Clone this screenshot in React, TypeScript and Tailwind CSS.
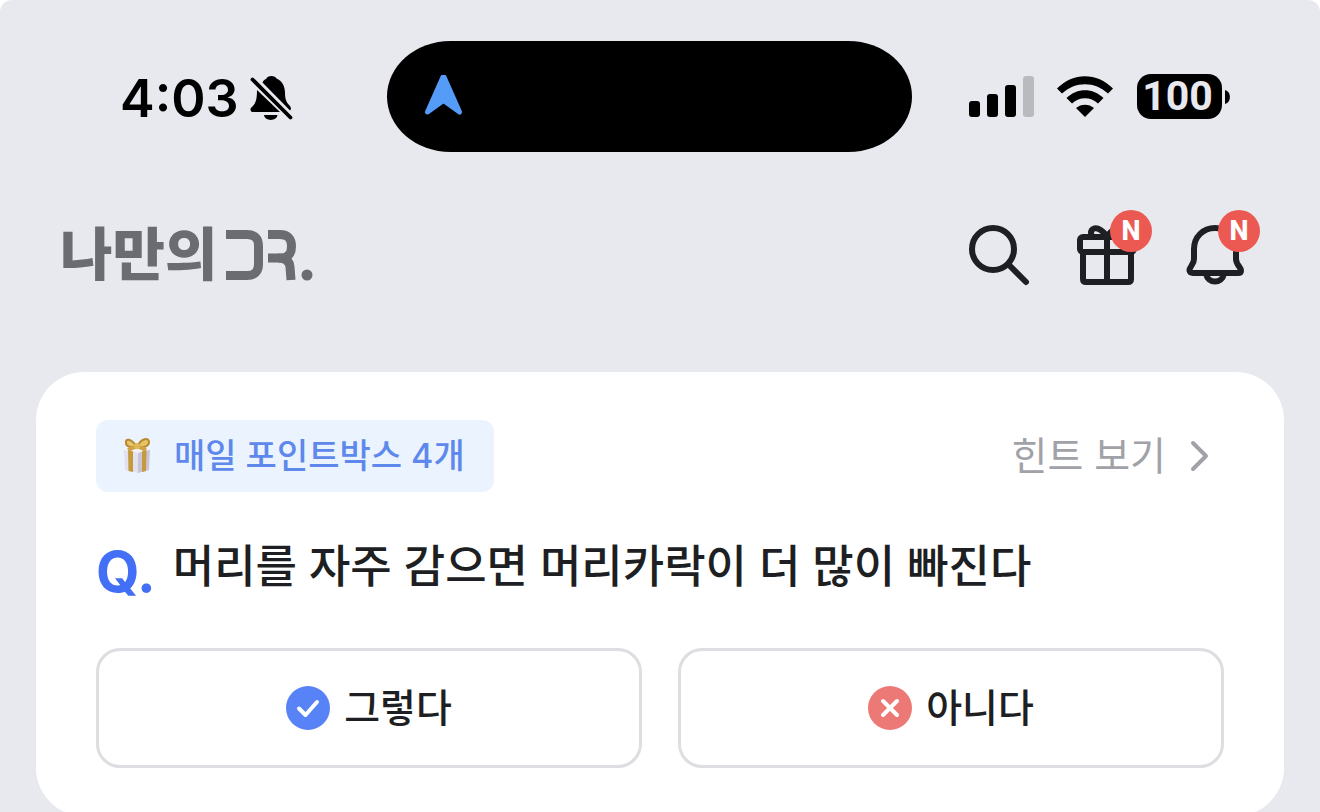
import type { ReactNode } from 'react';

function StatusBar() {
  return (
    <div className="flex items-center pl-[120px] pr-[90px] pt-[41px] text-black">
      <div className="flex shrink-0 items-center gap-[10px]">
        <span className="pt-1 text-[52px] font-semibold leading-[60px]">4:03</span>
        <svg viewBox="0 0 46 50" className="h-[50px] w-[46px]" aria-label="무음 모드">
          <path d="M8 18 L31 40 H3 C1 39 1 36 3 35 C7 31 8 27 8 18Z" />
          <path d="M13.500 10.500 C14.500 8 16 7.500 17.500 6.500 C18 3 26.500 3 27.500 6.500 C33 9 36 14 36 21 C36 28 38 31 41 34 C42.500 36 42 37.500 41 38.500 Z" />
          <path d="M15 43 H28.500 C27.500 49.500 16 49.500 15 43Z" />
          <path d="M3.500 7.500 L41.500 45.500" stroke="#000" strokeWidth="3.800" strokeLinecap="round" />
        </svg>
      </div>

      <div className="ml-[92px] mr-[57px] flex h-[111px] flex-1 items-center rounded-[64px/56px] bg-black pl-9">
        <svg viewBox="0 0 42 44" className="h-11 w-[42px]" aria-hidden="true">
          <path
            d="M20 2 L4.500 37 L20.500 25.500 L36.500 37 L21 2Z"
            fill="#559bf8"
            stroke="#559bf8"
            strokeWidth="5"
            strokeLinejoin="round"
          />
        </svg>
      </div>

      <div className="flex shrink-0 items-center">
        <svg viewBox="0 0 65 42" className="h-[42px] w-[65px]" aria-label="신호">
          <rect x="0" y="25" width="11" height="16" rx="3" />
          <rect x="18" y="18" width="11" height="23" rx="3" />
          <rect x="36" y="9" width="11" height="32" rx="3" />
          <rect x="54" y="0" width="11" height="41" rx="3" fill="#b9babe" />
        </svg>
        <svg viewBox="0 0 58 42" className="ml-[22px] h-[42px] w-[58px]" aria-label="와이파이">
          <path d="M1 12.500 C17 -4 41 -4 57 12.500 L52 17.500 C39 5 19 5 6 17.500Z" />
          <path d="M10.500 22 C21 11.500 37 11.500 47.500 22 L42 27.500 C34.500 20.500 23.500 20.500 16 27.500Z" />
          <path d="M20 32 C25 27.500 33 27.500 38 32 L29 41Z" />
        </svg>
        <div className="ml-[23px] flex h-[45px] w-[85px] items-center justify-center rounded-[14px] bg-black pr-1 font-['Roboto'] text-[41px] font-bold leading-[45px] text-[#e8e9ee]">
          100
        </div>
        <svg viewBox="0 0 5 14" className="ml-[3px] h-[14px] w-[5px]" aria-hidden="true">
          <path d="M0 0 C6.500 1.500 6.500 12.500 0 14Z" />
        </svg>
      </div>
    </div>
  );
}

function Logo() {
  return (
    <a href="#" className="flex items-center text-[57px] font-black leading-[72px] text-[#6b6c72]">
      나만의
      <svg viewBox="0 0 72 52" className="ml-[9px] h-[52px] w-[72px]" fill="none" stroke="currentColor" strokeWidth="9" aria-hidden="true">
        <path d="M0 5.500 H21 Q32.500 5.500 32.500 17 V35 Q32.500 46.500 21 46.500 H0" />
        <path d="M42 5.500 H54 Q65.500 5.500 65.500 17.500 Q65.500 29 54 29 H42" />
        <path d="M52 29 Q63.500 29 64 38 L65 51" />
      </svg>
      <svg viewBox="0 0 12 52" className="ml-[3px] h-[52px] w-3" fill="currentColor" aria-hidden="true">
        <circle cx="6" cy="46" r="5.500" />
      </svg>
    </a>
  );
}

function IconButton({ label, isNew, children }: { label: string; isNew?: boolean; children: ReactNode }) {
  return (
    <button type="button" aria-label={label} className="relative size-[72px]">
      <svg viewBox="0 0 72 72" className="size-[72px]" fill="none" stroke="#1e1f23" strokeWidth="6" strokeLinecap="round" strokeLinejoin="round">
        {children}
      </svg>
      {isNew && (
        <span className="absolute -right-[9px] -top-[9px] flex size-[42px] items-center justify-center rounded-full bg-[#eb5952] font-['Roboto'] text-[27px] font-extrabold leading-[42px] text-white">
          N
        </span>
      )}
    </button>
  );
}

function Answer({ label, children }: { label: string; children: ReactNode }) {
  return (
    <button
      type="button"
      className="flex h-[120px] flex-1 items-center justify-center gap-[14px] rounded-3xl border-[3px] border-[#dddee1] text-[39px] font-medium leading-[60px]"
    >
      <svg viewBox="0 0 44 44" className="size-11" fill="none" stroke="#fff" strokeWidth="4" strokeLinecap="round" strokeLinejoin="round" aria-hidden="true">
        {children}
      </svg>
      {label}
    </button>
  );
}

export default function App() {
  return (
    <div className="h-screen overflow-hidden rounded-t-xl bg-[#e8e9ee] font-['Inter','Noto_Sans_CJK_KR',sans-serif] text-[#1e1f23]">
      <StatusBar />

      <header className="mt-[67px] flex items-center justify-between pl-[60px] pr-[69px]">
        <Logo />
        <div className="flex gap-9">
          <IconButton label="검색">
            <circle cx="30" cy="30" r="21" />
            <path d="M46 46 L63 63" />
          </IconButton>
          <IconButton label="선물" isNew>
            <rect x="9" y="18" width="54" height="15" rx="3" />
            <path d="M12 34 V60 Q12 63 15 63 H57 Q60 63 60 60 V34 M36 18 V63" />
            <path d="M36 17 C31 11 27 8 23 9.500 C19 11 19 17 23 18 M36 17 C41 11 45 8 49 9.500 C53 11 53 17 49 18" />
          </IconButton>
          <IconButton label="알림" isNew>
            <path d="M36 9 C24 9 15 18 15 30 V40 C15 46 10 48 10.500 51.500 Q11 54 14 54 H59 Q62 54 62 51.500 C62 48 57 46 57 40 V30 C57 18 48 9 36 9Z" />
            <path d="M27 55 C29 65 43 65 45 55" />
          </IconButton>
        </div>
      </header>

      <main className="mx-9 mt-[81px] rounded-[48px] bg-white px-[60px] py-12">
        <div className="flex items-center justify-between">
          <div className="flex h-[72px] items-center gap-5 rounded-xl bg-[#ebf4fe] pl-6 pr-[29px] text-[34px] font-medium leading-[52px] text-[#5f88ec]">
            <svg viewBox="0 0 34 38" className="h-[38px] w-[34px]" aria-hidden="true">
              <path d="M4 13 L18 15 V36 L5 33Z" fill="#e3e0ef" />
              <path d="M18 15 L30 13 L29 33 L18 36Z" fill="#c9c5d6" />
              <path d="M4 12 L18 10 L30 12 L18 16Z" fill="#f3f1f8" />
              <path d="M8 13 L13 14.500 V35 L8.500 34Z M22 14.500 L26.500 13 L26 34 L22 35Z" fill="#c49a3c" />
              <path d="M17 10 C11 1 5 1 6 6 C6 10 12 11 17 10 C21 1 29 0 29 5 C29 10 22 11 17 10Z" fill="#e6c469" stroke="#b98a2d" strokeWidth="2" />
              <path d="M17 9 L8 13 M17 9 L26 13" stroke="#d0a344" strokeWidth="4" />
              <circle cx="17" cy="9" r="3" fill="#e1b858" />
            </svg>
            매일 포인트박스 4개
          </div>
          <a href="#" className="flex items-center gap-[14px] pr-2 text-[39px] leading-[56px] text-[#a1a2a8]">
            힌트 보기
            <svg viewBox="0 0 36 36" className="size-9" fill="none" stroke="currentColor" strokeWidth="4" strokeLinecap="round" strokeLinejoin="round" aria-hidden="true">
              <path d="M13 5 L26 18 L13 31" />
            </svg>
          </a>
        </div>

        <div className="mt-9 flex items-start gap-[17px]">
          <span className="pt-2 text-[56px] font-bold leading-[72px] text-[#426ff5]">Q.</span>
          <h1 className="text-[45px] font-medium leading-[78px]">머리를 자주 감으면 머리카락이 더 많이 빠진다</h1>
        </div>

        <div className="mt-10 flex gap-9">
          <Answer label="그렇다">
            <circle cx="22" cy="22" r="22" fill="#5783f6" stroke="none" />
            <path d="M13 22.500 L19.500 29 L31 16" />
          </Answer>
          <Answer label="아니다">
            <circle cx="22" cy="22" r="22" fill="#ed7977" stroke="none" />
            <path d="M15 15 L29 29 M29 15 L15 29" />
          </Answer>
        </div>
      </main>
    </div>
  );
}
